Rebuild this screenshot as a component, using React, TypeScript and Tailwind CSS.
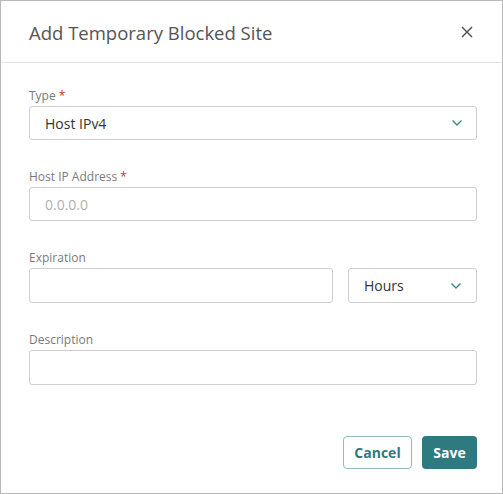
import React from "react";

const Chevron: React.FC = () => (
  <svg width="12" height="8" viewBox="0 0 12 8" fill="none" className="text-[#3a8a92]">
    <path d="M1.5 1.5 L6 6 L10.5 1.5" stroke="currentColor" strokeWidth="1.4" />
  </svg>
);

const Label: React.FC<{ text: string; required?: boolean }> = ({ text, required }) => (
  <label className="block text-[12px] leading-4 mb-[2px] text-[#7a7a7a]">
    {text}
    {required && <span className="text-[#e0282e] ml-[3px]">*</span>}
  </label>
);

export default function App() {
  return (
    <div
      className="w-[503px] h-[494px] bg-white border border-[#b9b9b9] flex flex-col"
      style={{ fontFamily: '"Open Sans", "Liberation Sans", sans-serif' }}
    >
      {/* header */}
      <div className="h-[62px] flex items-center justify-between pl-[28px] pr-[25px] border-b border-[#e3e3e3]">
        <h2 className="text-[18.5px] text-[#555] pt-[2px]">Add Temporary Blocked Site</h2>
        <button className="w-5 h-5 flex items-center justify-center text-[#555]">
          <svg width="12" height="12" viewBox="0 0 12 12">
            <path d="M1 1 L11 11 M11 1 L1 11" stroke="currentColor" strokeWidth="1.5" />
          </svg>
        </button>
      </div>

      {/* body */}
      <div className="flex-1 flex flex-col pl-[28px] pr-[25px] pt-[25px]">
        <div>
          <Label text="Type" required />
          <div className="h-[34px] border border-[#cfcfcf] rounded-[3px] flex items-center justify-between pl-[15px] pr-[13px]">
            <span className="text-[14px] text-[#333]">Host IPv4</span>
            <Chevron />
          </div>
        </div>

        <div className="mt-[29px]">
          <Label text="Host IP Address" required />
          <div className="h-[34px] border border-[#cfcfcf] rounded-[3px] flex items-center pl-[15px]">
            <span className="text-[14px] text-[#b0b0b0]">0.0.0.0</span>
          </div>
        </div>

        <div className="mt-[29px]">
          <Label text="Expiration" />
          <div className="flex gap-[15px]">
            <div className="w-[304px] h-[35px] border border-[#cfcfcf] rounded-[3px]" />
            <div className="flex-1 h-[35px] border border-[#cfcfcf] rounded-[3px] flex items-center justify-between pl-[15px] pr-[14px]">
              <span className="text-[14px] text-[#333]">Hours</span>
              <Chevron />
            </div>
          </div>
        </div>

        <div className="mt-[29px]">
          <Label text="Description" />
          <div className="h-[35px] border border-[#cfcfcf] rounded-[3px]" />
        </div>

        <div className="flex justify-end gap-[10px] mt-[51px]">
          <button className="w-[69px] h-[33px] border border-[#8fbcc1] rounded-[4px] text-[14px] font-bold text-[#2e7a80]">
            Cancel
          </button>
          <button className="w-[55px] h-[33px] bg-[#2e7a80] rounded-[4px] text-[14px] font-bold text-white">
            Save
          </button>
        </div>
      </div>
    </div>
  );
}
